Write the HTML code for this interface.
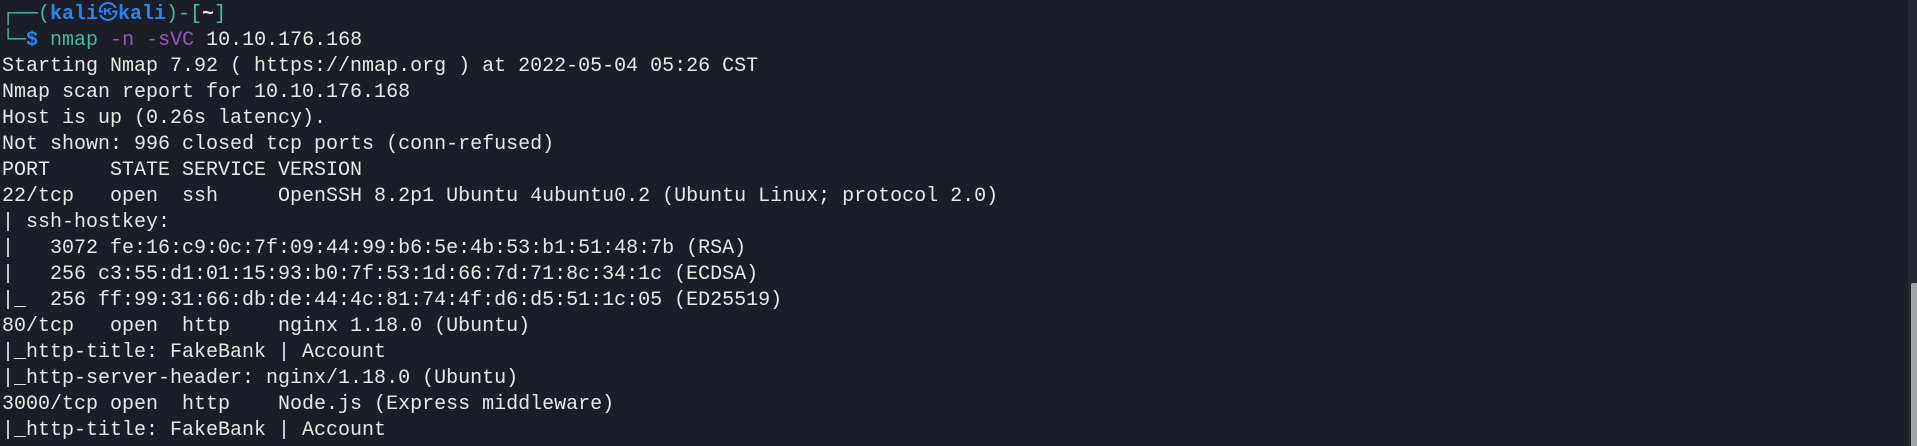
<!DOCTYPE html>
<html><head><meta charset="utf-8"><style>
html,body{margin:0;padding:0;background:#1b1e26;width:1917px;height:446px;overflow:hidden}
pre{margin:0;padding:2px 0 0 2px;font-family:"Liberation Mono","DejaVu Sans Mono","Noto Sans CJK JP",monospace;font-size:20px;line-height:26px;color:#e8e8e8;white-space:pre}
.g{color:#48b99a}.b{color:#2e82ee;font-weight:bold}.p{color:#9a53b8}.t{color:#48b99a}
.sb{position:absolute;left:1908px;top:0;width:9px;height:446px;background:#262933}
.th{position:absolute;left:1911px;top:283px;width:6px;height:163px;background:#a3a4a6;border-radius:2px 0 0 0}
</style></head><body>
<pre><span class="g">┌──(</span><span class="b">kali㉿kali</span><span class="g">)-[</span><b>~</b><span class="g">]</span>
<span class="g">└─</span><span class="b">$</span> <span class="t">nmap</span> <span class="p">-n -sVC</span> 10.10.176.168
Starting Nmap 7.92 ( https://nmap.org ) at 2022-05-04 05:26 CST
Nmap scan report for 10.10.176.168
Host is up (0.26s latency).
Not shown: 996 closed tcp ports (conn-refused)
PORT     STATE SERVICE VERSION
22/tcp   open  ssh     OpenSSH 8.2p1 Ubuntu 4ubuntu0.2 (Ubuntu Linux; protocol 2.0)
| ssh-hostkey: 
|   3072 fe:16:c9:0c:7f:09:44:99:b6:5e:4b:53:b1:51:48:7b (RSA)
|   256 c3:55:d1:01:15:93:b0:7f:53:1d:66:7d:71:8c:34:1c (ECDSA)
|_  256 ff:99:31:66:db:de:44:4c:81:74:4f:d6:d5:51:1c:05 (ED25519)
80/tcp   open  http    nginx 1.18.0 (Ubuntu)
|_http-title: FakeBank | Account
|_http-server-header: nginx/1.18.0 (Ubuntu)
3000/tcp open  http    Node.js (Express middleware)
|_http-title: FakeBank | Account</pre>
<div class="sb"></div><div class="th"></div>
</body></html>
